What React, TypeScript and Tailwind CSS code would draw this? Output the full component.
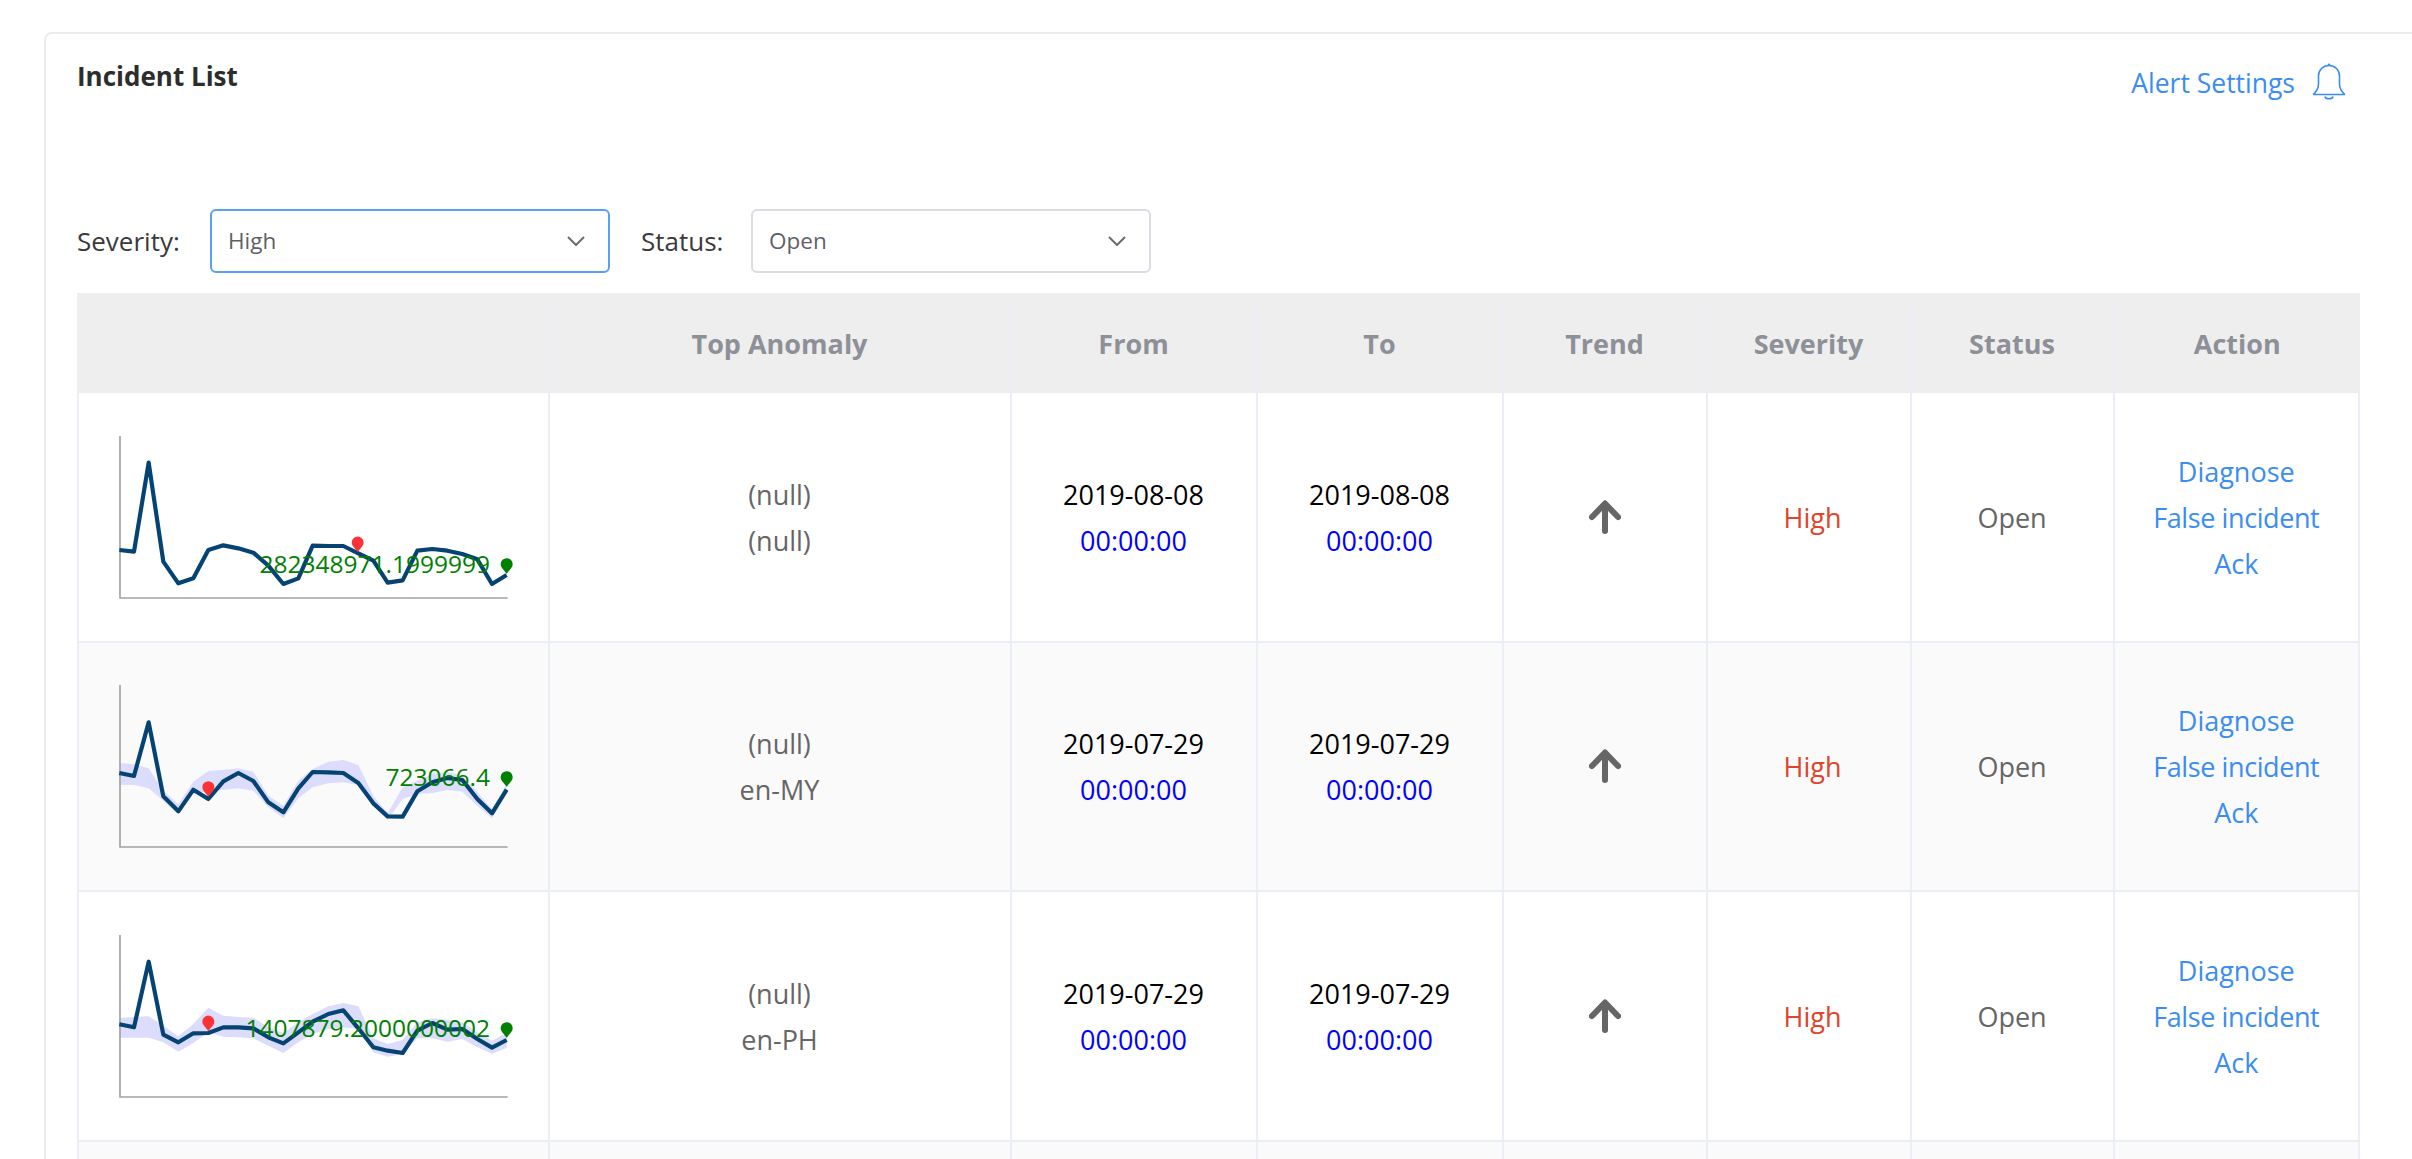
import React from "react";

const xs = [88,132,176,220,265,310,355,400,445,490,535,580,625,668,715,760,805,850,893,938,982,1027,1072,1117,1162,1206,1250];

type Row = {
  y0: number; line: number[]; upper?: number[]; lower?: number[];
  red: [number, number]; green: number; label: string; labelY: number;
  top: string; from: string; to: string; alt: boolean;
};

const rows: Row[] = [
  { y0: 51, alt: false, top: "(null)", from: "2019-08-08", to: "2019-08-08",
    line: [450,455,188,485,550,535,450,436,445,458,497,552,535,437,438,438,460,482,548,541,452,447,452,462,478,552,525],
    red: [803,410], green: 475, label: "282348971.1999999", labelY: 518 },
  { y0: 21, alt: true, top: "en-MY", from: "2019-07-29", to: "2019-07-29",
    line: [342,351,190,412,457,392,420,367,342,366,430,460,388,339,340,342,372,433,472,473,397,370,357,363,420,463,392],
    upper: [312,316,328,395,435,368,336,333,328,338,410,440,365,330,308,303,318,410,463,385,365,345,338,350,400,450,375],
    lower: [377,378,388,425,465,405,395,392,388,395,445,477,418,385,373,370,378,440,482,420,405,402,393,398,440,478,400],
    red: [355,367], green: 337, label: "723066.4", labelY: 380 },
  { y0: 51, alt: false, top: "en-PH", from: "2019-07-29", to: "2019-07-29",
    line: [376,385,188,407,430,403,402,385,385,388,415,433,400,368,345,334,388,445,455,462,395,372,392,390,420,446,423],
    upper: [357,354,352,380,412,375,326,350,354,356,385,402,370,345,322,312,322,418,435,423,370,358,362,370,400,425,402],
    lower: [416,416,416,430,458,432,400,413,415,418,440,462,430,405,390,385,390,460,473,465,418,418,428,420,445,464,447],
    red: [355,350], green: 370, label: "1407879.2000000002", labelY: 413 },
];

const headCols = "grid grid-cols-[472.5px_462px_246px_246px_204px_204px_203px_245.5px]";
const bodyCols = "grid grid-cols-[470.5px_462px_246px_246px_204px_204px_203px_243.5px]";
const cell = "flex flex-col items-center justify-center border-r-2 border-[#eceef6] last:border-r-0";

function Pin({ x, top, color }: { x: number; top: number; color: string }) {
  const tip = top + 46;
  return <path d={`M${x} ${tip}L${x - 14} ${top + 29}A18 18 0 1 1 ${x + 14} ${top + 29}Z`} fill={color} />;
}

function Chart({ r }: { r: Row }) {
  const pts = (a: number[]) => a.map((y, i) => `${xs[i]},${y}`);
  const axisTop = r.y0 + 57;
  return (
    <svg width="420" height="200" viewBox={`78 ${r.y0} 1260 600`} className="block">
      {r.upper && r.lower && (
        <polygon points={[...pts(r.upper), ...pts(r.lower).reverse()].join(" ")} fill="#dcdcfc" />
      )}
      <polyline points={`90,${axisTop} 90,${axisTop + 486} 1253,${axisTop + 486}`} fill="none" stroke="#a3a3a3" strokeWidth="5" />
      <polyline points={pts(r.line).join(" ")} fill="none" stroke="#054373" strokeWidth="12.5" strokeLinejoin="round" />
      <Pin x={r.red[0]} top={r.red[1]} color="#fb3337" />
      <Pin x={1250} top={r.green} color="#008000" />
      <text x="1200" y={r.labelY} textAnchor="end" fill="#008000" fontSize="73.5">{r.label}</text>
    </svg>
  );
}

function Chevron({ color = "#6b6b74" }: { color?: string }) {
  return (
    <svg width="18" height="10" viewBox="0 0 18 10" fill="none" stroke={color} strokeWidth="2">
      <path d="M1 1L9 9L17 1" />
    </svg>
  );
}

function Select({ value, focused }: { value: string; focused?: boolean }) {
  return (
    <div className={`w-[400px] h-[64px] flex items-center justify-between pl-[16px] pr-[23px] rounded-[6px] border-2 bg-white ${focused ? "border-[#57a0f5]" : "border-[#dcdde3]"}`}>
      <span className="text-[22.5px] text-[#5f5f69]">{value}</span>
      <Chevron />
    </div>
  );
}

function Bell() {
  return (
    <svg width="34" height="37" viewBox="0 0 34 37" fill="none" stroke="#3b8df2" strokeWidth="1.6">
      <path d="M1 31.5H33M1 31.5C3.5 29.5 6.5 26 6.5 21V13C6.5 7 11 2.5 17 2.5C23 2.5 27.5 7 27.5 13V21C27.5 26 30.5 29.5 33 31.5" />
      <path d="M13 33.5C13.5 36.5 20.5 36.5 21 33.5" />
      <circle cx="17" cy="1.6" r="1.2" fill="#3b8df2" stroke="none" />
    </svg>
  );
}

function Arrow() {
  return (
    <svg width="32" height="34" viewBox="0 0 32 34" fill="none" stroke="#666" strokeWidth="6" strokeLinecap="round" strokeLinejoin="round">
      <path d="M16 31V4M3 17L16 3.5L29 17" />
    </svg>
  );
}

const font = "[font-family:'Open_Sans','Noto_Sans',sans-serif]";

export default function App() {
  return (
    <div className={`h-[1159px] w-full overflow-hidden bg-white pt-[32px] pl-[44px] ${font}`}>
      <div className="w-[2500px] border-2 border-[#ececec] rounded-[8px] pl-[31px] bg-white">
        <div className="w-[2283px] h-[175px] flex items-start justify-between">
          <h1 className="text-[26px] leading-[36px] font-bold text-[#2d2d2d] mt-[24px]">Incident List</h1>
          <div className="flex items-start gap-[17px] pr-[14px] mt-[29px]">
            <span className="text-[26.5px] leading-[40px] text-[#3b8df2]">Alert Settings</span>
            <Bell />
          </div>
        </div>
        <div className="flex items-center h-[64px] w-[2283px] text-[26px] text-[#3a3a3a]">
          <span className="w-[133px]">Severity:</span>
          <Select value="High" focused />
          <span className="ml-[31px] w-[110px]">Status:</span>
          <Select value="Open" />
        </div>
        <div className="w-[2283px] mt-[20px] text-[27px] text-[#666]">
          <div className={`${headCols} h-[100px] bg-[#eeeeef] font-bold text-[#8e9098]`}>
            {["", "Top Anomaly", "From", "To", "Trend", "Severity", "Status", "Action"].map((h) => (
              <div key={h} className={`${cell} pt-[2px] border-[#e6e7ee]`}>{h}</div>
            ))}
          </div>
          {rows.map((r, i) => (
            <div key={i} className={`${bodyCols} h-[249.67px] border-x-2 border-b-2 border-[#eceef6] ${r.alt ? "bg-[#fafafb]" : "bg-white"}`}>
              <div className={`${cell} items-start pl-[37px]`}><Chart r={r} /></div>
              <div className={`${cell} pt-[2px] leading-[46px]`}><div>(null)</div><div>{r.top}</div></div>
              <div className={`${cell} pt-[2px] leading-[46px]`}><div className="text-black">{r.from}</div><div className="text-[#0000ff]">00:00:00</div></div>
              <div className={`${cell} pt-[2px] leading-[46px]`}><div className="text-black">{r.to}</div><div className="text-[#0000ff]">00:00:00</div></div>
              <div className={cell}><Arrow /></div>
              <div className={`${cell} pt-[2px] pl-[8px] text-[#e0442a]`}>High</div>
              <div className={`${cell} pt-[2px]`}>Open</div>
              <div className={`${cell} pt-[2px] leading-[46px] text-[#3b8df2]`}><div>Diagnose</div><div className="tracking-[-0.4px]">False incident</div><div>Ack</div></div>
            </div>
          ))}
          <div className={`${bodyCols} h-[249.67px] border-x-2 border-b-2 border-[#eceef6] bg-[#fafafb]`}>
            {Array.from({ length: 8 }).map((_, i) => <div key={i} className={cell} />)}
          </div>
        </div>
      </div>
    </div>
  );
}
